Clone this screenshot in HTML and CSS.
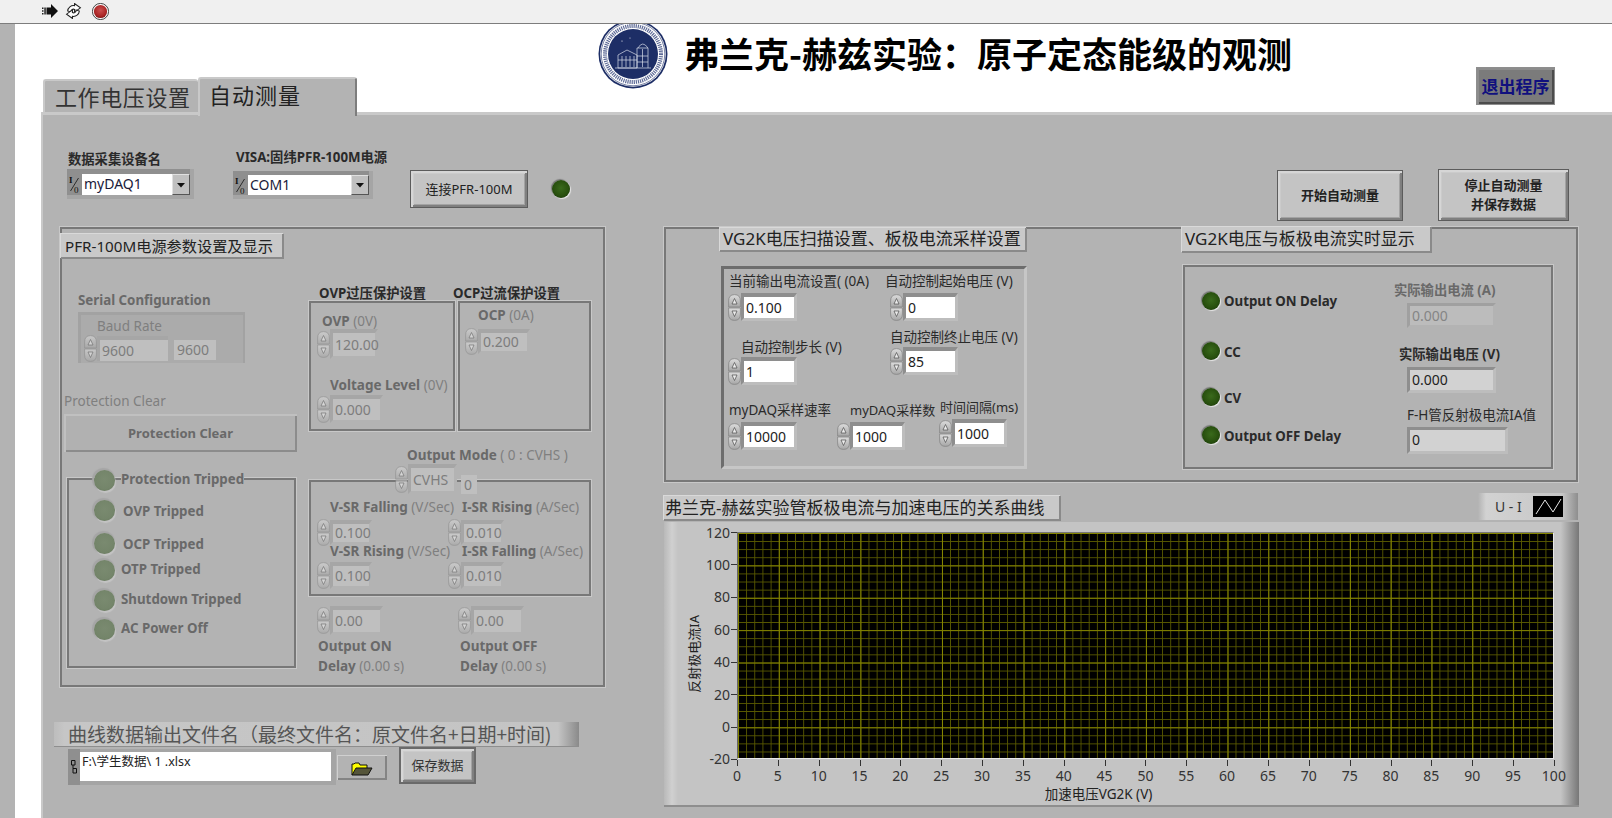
FILE: index.html
```html
<!DOCTYPE html>
<html lang="zh">
<head>
<meta charset="utf-8">
<title>弗兰克-赫兹实验</title>
<link rel="stylesheet" href="styles.css">
</head>
<body>
<svg class="defs" width="0" height="0" aria-hidden="true">
  <defs>
    <linearGradient id="lobe" x1="0" x2="0" y1="0" y2="1"><stop offset="0" stop-color="#dcdcdc"/><stop offset="1" stop-color="#a6a6a6"/></linearGradient>
    <radialGradient id="redball" cx=".5" cy=".4" r=".65"><stop offset="0" stop-color="#cc4f4f"/><stop offset=".7" stop-color="#aa2626"/><stop offset="1" stop-color="#701212"/></radialGradient>
    <symbol id="spin" viewBox="0 0 13 27">
      <path d="M.6 7Q.6 .6 6.500 .6Q12.400 .6 12.400 7V13H.6Z" fill="url(#lobe)" stroke="#858585" stroke-width=".8"/>
      <path d="M.6 14H12.400V20Q12.400 26.400 6.500 26.400Q.6 26.400 .6 20Z" fill="url(#lobe)" stroke="#858585" stroke-width=".8"/>
      <path d="M6.500 4.500L4 10H9Z" fill="#ececec" stroke="#4a4a4a" stroke-width=".7"/>
      <path d="M6.500 22.500L4 17H9Z" fill="#ececec" stroke="#4a4a4a" stroke-width=".7"/>
    </symbol>
    <symbol id="io" viewBox="0 0 13 20">
      <text x="1" y="9" font-size="9" font-family="Liberation Serif, serif" font-weight="700" fill="#111">I</text>
      <text x="6" y="19" font-size="9" font-family="Liberation Serif, serif" fill="#111">0</text>
      <path d="M10.500 4L2.500 17" stroke="#111" stroke-width=".8"/>
    </symbol>
    <symbol id="arrowdown" viewBox="0 0 10 10"><path d="M1 3H9L5 7.500Z" fill="#111"/></symbol>
  </defs>
</svg>

<main class="canvas">
  <header class="toolbar">
    <svg class="tool tool-run" viewBox="0 0 16 14"><path d="M0 3.500H1.500V5H0ZM0 6.200H1.500V7.800H0ZM0 9H1.500V10.500H0ZM2.300 3.500H3.800V10.500H2.300Z" fill="#222"/><path d="M4.500 3.500H9V0L16 7L9 14V10.500H4.500Z" fill="#111"/></svg>
    <svg class="tool tool-cont" viewBox="0 0 16 15"><path d="M2.500 7.500A5.500 5.500 0 0 1 9 2.500V.5L14.500 4.500L9 8.500V6A2.500 2.500 0 0 0 5.500 8.500Z" fill="#fff" stroke="#222" stroke-width="1"/><path d="M13.500 7.500A5.500 5.500 0 0 1 7 12.500V14.500L1.500 10.500L7 6.500V9A2.500 2.500 0 0 0 10.500 6.500Z" fill="#fff" stroke="#222" stroke-width="1"/></svg>
    <svg class="tool tool-stop" viewBox="0 0 16 16"><circle cx="8" cy="8" r="7.600" fill="#fff" stroke="#222" stroke-width=".8"/><circle cx="8" cy="8" r="6.200" fill="url(#redball)"/></svg>
  </header>

  <div class="strip"></div>

  <svg class="logo" viewBox="0 0 70 70">
    <circle cx="35" cy="35" r="34.500" fill="#1d2e66"/>
    <circle cx="35" cy="35" r="32.800" fill="#fff"/>
    <circle cx="35" cy="35" r="31.800" fill="none" stroke="#1d2e66" stroke-width=".6"/>
    <circle cx="35" cy="35" r="28" fill="none" stroke="#5d6a96" stroke-width="4" stroke-dasharray="1.200 .9"/>
    <circle cx="35" cy="35" r="25" fill="#1d2e66"/>
    <g fill="none" stroke="#d8dcea" stroke-width=".7">
      <path d="M20 49V36L29 31L39 36V49ZM17 49H53"/>
      <path d="M20 41H39M24 37V48M28 37V48M32 37V48M36 37V48"/>
      <path d="M39 49V29H50V49M40 29Q44.500 21 50 29M44.500 30V48M39 37H50M39 43H50"/>
    </g>
    <circle cx="24" cy="22" r=".6" fill="#fff"/><circle cx="32" cy="19" r=".5" fill="#fff"/>
  </svg>
  <h1 class="title">弗兰克-赫兹实验&#xFF1A;原子定态能级的观测</h1>
  <button class="btn btn-exit">退出程序</button>

  <div class="panel"></div>
  <div class="tab tab-one">工作电压设置</div>
  <div class="tab tab-two">自动测量</div>

  <section class="sec-top">
    <span class="lbl bold l-daq">数据采集设备名</span>
    <span class="lbl bold l-visa">VISA:固纬PFR-100M电源</span>
    <div class="ring ring-daq"><svg class="io"><use href="#io"/></svg><span class="ring-val">myDAQ1</span><span class="ring-btn"><svg class="ring-arrow"><use href="#arrowdown"/></svg></span></div>
    <div class="ring ring-com"><svg class="io"><use href="#io"/></svg><span class="ring-val">COM1</span><span class="ring-btn"><svg class="ring-arrow"><use href="#arrowdown"/></svg></span></div>
    <button class="btn btn-conn">连接PFR-100M</button>
    <span class="led led-conn"></span>
    <button class="btn btn-start">开始自动测量</button>
    <button class="btn btn-stop">停止自动测量<br>并保存数据</button>
  </section>

  <section class="sec-power">
    <div class="grp grp-power"></div>
    <div class="cap cap-power">PFR-100M电源参数设置及显示</div>

    <span class="lbl dis bold l-serial">Serial Configuration</span>
    <div class="baud"></div>
    <span class="lbl dis l-baud">Baud Rate</span>
    <div class="num d-baud dim"><svg class="spin"><use href="#spin"/></svg><span class="val flat">9600</span></div>
    <span class="flatbox d-baud2">9600</span>

    <span class="lbl dis l-pc">Protection Clear</span>
    <button class="btn btn-pc">Protection Clear</button>

    <span class="lbl bold l-ovph">OVP过压保护设置</span>
    <span class="lbl bold l-ocph">OCP过流保护设置</span>
    <div class="grp grp-ovp"></div>
    <div class="grp grp-ocp"></div>
    <span class="lbl dis l-ovp"><b>OVP</b> (0V)</span>
    <div class="num d-ovp dim"><svg class="spin"><use href="#spin"/></svg><span class="val">120.00</span></div>
    <span class="lbl dis l-volt"><b>Voltage Level</b> (0V)</span>
    <div class="num d-volt dim"><svg class="spin"><use href="#spin"/></svg><span class="val">0.000</span></div>
    <span class="lbl dis l-ocp"><b>OCP</b> (0A)</span>
    <div class="num d-ocp dim"><svg class="spin"><use href="#spin"/></svg><span class="val">0.200</span></div>

    <div class="grp grp-trip"></div>
    <span class="lbl dis bold masked l-t1">Protection Tripped</span>
    <span class="lbl dis bold l-t2">OVP Tripped</span>
    <span class="lbl dis bold l-t3">OCP Tripped</span>
    <span class="lbl dis bold l-t4">OTP Tripped</span>
    <span class="lbl dis bold l-t5">Shutdown Tripped</span>
    <span class="lbl dis bold l-t6">AC Power Off</span>
    <span class="led big t1"></span><span class="led big t2"></span><span class="led big t3"></span>
    <span class="led big t4"></span><span class="led big t5"></span><span class="led big t6"></span>

    <span class="lbl dis l-mode"><b>Output Mode</b> ( 0 : CVHS )</span>
    <div class="grp grp-mode"></div>
    <div class="num d-mode dim"><svg class="spin"><use href="#spin"/></svg><span class="val">CVHS</span></div>
    <span class="flatbox d-zero">0</span>
    <span class="lbl dis l-vf"><b>V-SR Falling</b> (V/Sec)</span>
    <span class="lbl dis l-ir"><b>I-SR Rising</b> (A/Sec)</span>
    <div class="num d-vf dim"><svg class="spin"><use href="#spin"/></svg><span class="val">0.100</span></div>
    <div class="num d-ir dim"><svg class="spin"><use href="#spin"/></svg><span class="val">0.010</span></div>
    <span class="lbl dis l-vr"><b>V-SR Rising</b> (V/Sec)</span>
    <span class="lbl dis l-if"><b>I-SR Falling</b> (A/Sec)</span>
    <div class="num d-vr dim"><svg class="spin"><use href="#spin"/></svg><span class="val">0.100</span></div>
    <div class="num d-if dim"><svg class="spin"><use href="#spin"/></svg><span class="val">0.010</span></div>
    <div class="num d-on dim"><svg class="spin"><use href="#spin"/></svg><span class="val">0.00</span></div>
    <div class="num d-off dim"><svg class="spin"><use href="#spin"/></svg><span class="val">0.00</span></div>
    <span class="lbl dis two l-on"><b>Output ON</b><br><b>Delay</b> (0.00 s)</span>
    <span class="lbl dis two l-off"><b>Output OFF</b><br><b>Delay</b> (0.00 s)</span>
  </section>

  <section class="sec-file">
    <div class="filecap">曲线数据输出文件名&#xFF08;最终文件名&#xFF1A;原文件名+日期+时间)</div>
    <div class="path">
      <svg class="path-ico" viewBox="0 0 6 14"><path d="M.5 .5H4V5H.5ZM2 5V8.500M2 8.500H5.500V13H2Z" fill="none" stroke="#111"/></svg>
      <span class="path-val">F:\学生数据\ 1 .xlsx</span>
    </div>
    <button class="browse">
      <svg class="folder" viewBox="0 0 22 14"><path d="M1 13V2H3L4 1H8L9 3H16V6" fill="#ffff00" stroke="#111"/><path d="M1 13L5 6H21L17 13Z" fill="#55553a" stroke="#111"/></svg>
    </button>
    <button class="btn btn-save">保存数据</button>
  </section>

  <section class="sec-vg">
    <div class="grp grp-vg"></div>
    <div class="cap cap-scan">VG2K电压扫描设置、板极电流采样设置</div>
    <div class="cap cap-real">VG2K电压与板极电流实时显示</div>
    <div class="inner inner-scan"></div>
    <div class="inner inner-real"></div>

    <span class="lbl l-cur">当前输出电流设置( (0A)</span>
    <div class="num n-cur"><svg class="spin"><use href="#spin"/></svg><span class="val">0.100</span></div>
    <span class="lbl l-start">自动控制起始电压 (V)</span>
    <div class="num n-start"><svg class="spin"><use href="#spin"/></svg><span class="val">0</span></div>
    <span class="lbl l-step">自动控制步长 (V)</span>
    <div class="num n-step"><svg class="spin"><use href="#spin"/></svg><span class="val">1</span></div>
    <span class="lbl l-stop">自动控制终止电压 (V)</span>
    <div class="num n-stop"><svg class="spin"><use href="#spin"/></svg><span class="val">85</span></div>
    <span class="lbl l-rate">myDAQ采样速率</span>
    <div class="num n-rate"><svg class="spin"><use href="#spin"/></svg><span class="val">10000</span></div>
    <span class="lbl l-cnt">myDAQ采样数</span>
    <div class="num n-cnt"><svg class="spin"><use href="#spin"/></svg><span class="val">1000</span></div>
    <span class="lbl l-itv">时间间隔(ms)</span>
    <div class="num n-itv"><svg class="spin"><use href="#spin"/></svg><span class="val">1000</span></div>

    <span class="led s1"></span><span class="lbl bold l-s1">Output ON Delay</span>
    <span class="led s2"></span><span class="lbl bold l-s2">CC</span>
    <span class="led s3"></span><span class="lbl bold l-s3">CV</span>
    <span class="led s4"></span><span class="lbl bold l-s4">Output OFF Delay</span>

    <span class="lbl dis bold l-rcur">实际输出电流 (A)</span>
    <span class="ind ind-dis r-cur">0.000</span>
    <span class="lbl bold l-rvolt">实际输出电压 (V)</span>
    <span class="ind r-volt">0.000</span>
    <span class="lbl l-ria">F-H管反射极电流IA值</span>
    <span class="ind r-ia">0</span>
  </section>

  <section class="sec-graph">
    <div class="cap cap-graph">弗兰克-赫兹实验管板极电流与加速电压的关系曲线</div>
    <div class="legend"><span class="legend-name">U - I</span>
      <svg class="legend-ico" viewBox="0 0 30 21"><path d="M3 18L12 4L20 16L28 3" fill="none" stroke="#e8e8e8"/></svg>
    </div>
    <div class="graph">
      <div class="ytitle">反射极电流IA</div>
      <div class="yaxis">
        <span>120</span><span>100</span><span>80</span><span>60</span><span>40</span><span>20</span><span>0</span><span>-20</span>
      </div>
      <div class="plot"></div>
      <div class="xaxis">
        <span>0</span><span>5</span><span>10</span><span>15</span><span>20</span><span>25</span><span>30</span><span>35</span><span>40</span><span>45</span><span>50</span><span>55</span><span>60</span><span>65</span><span>70</span><span>75</span><span>80</span><span>85</span><span>90</span><span>95</span><span>100</span>
      </div>
      <div class="xtitle">加速电压VG2K (V)</div>
    </div>
  </section>
</main>
</body>
</html>
```

FILE: styles.css
```css
* { box-sizing: border-box; }
html, body { margin: 0; padding: 0; background: #fff; overflow: hidden; }
body { font-family: "Noto Sans", "Noto Sans CJK SC", sans-serif; font-size: 13px; color: #222; }
.defs { position: absolute; }
.canvas { position: relative; width: 1612px; height: 818px; overflow: hidden; background: #fff; }

/* toolbar */
.toolbar { position: relative; z-index: 5; height: 24px; background: #f0f0f0; border-bottom: 1px solid #7d7d7d; display: flex; align-items: center; padding: 0 0 1px 42px; }
.tool { display: block; flex: none; }
.tool-run { width: 16px; height: 14px; margin-right: 7px; }
.tool-cont { width: 17px; height: 16px; margin-right: 10px; }
.tool-stop { width: 17px; height: 17px; }
.strip { position: absolute; left: 0; top: 24px; width: 15px; bottom: 0; background: #b3b3b3; }

/* header */
.logo { position: absolute; left: 598px; top: 19px; width: 70px; height: 70px; }
.title { position: absolute; left: 684px; top: 28px; margin: 0; font: 700 35px/50px "Noto Sans CJK SC", sans-serif; color: #000; white-space: nowrap; }

/* panel and tabs */
.panel { position: absolute; left: 41px; top: 112px; right: 0; bottom: 0; background: #b3b3b3; border-top: 3px solid #c9c9c9; border-left: 2px solid #c9c9c9; }
.tab { position: absolute; background: #b3b3b3; border-top: 2px solid #c9c9c9; border-left: 2px solid #c9c9c9; font: 400 22px/30px "Noto Sans CJK SC", sans-serif; color: #333; white-space: nowrap; border-radius: 3px 3px 0 0; }
.tab-one { left: 43px; top: 79px; width: 155px; height: 33px; padding: 0 0 0 10px; letter-spacing: .6px; }
.tab-two { left: 198px; top: 77px; width: 159px; height: 39px; padding: 0 0 0 9px; letter-spacing: 1px; border-right: 2px solid #7d7d7d; color: #222; }

/* generic labels */
.lbl { position: absolute; white-space: nowrap; line-height: 16px; font-size: 13.500px; color: #2a2a2a; }
.lbl b { font-weight: 700; }
.bold { font-weight: 700; font-size: 13.300px; }
.dis { color: #7f7f7f; }
.dis b, .dis.bold { color: #696969; }
.two { line-height: 20px; }
.masked { background: #b3b3b3; }

/* buttons */
.btn { position: absolute; margin: 0; padding: 0; display: block; font-family: inherit; font-size: 13px; line-height: 19px; color: #222; background: #c4c4c4; border: 1px solid #5c5c5c; box-shadow: inset 2px 2px 0 #d6d6d6, inset -2px -2px 0 #7f7f7f, inset 3px 3px 0 #cbcbcb, inset -3px -3px 0 #a3a3a3; }
.btn-exit { left: 1476px; top: 67px; width: 79px; height: 38px; font-size: 17px; font-weight: 700; color: #10107e; background: #7b7b7b; border-color: #8e8e8e; box-shadow: inset 2px 2px 0 #8c8c8c, inset -2px -2px 0 #4c4c4c; }
.btn-conn { left: 410px; top: 170px; width: 118px; height: 38px; }
.btn-start { left: 1277px; top: 170px; width: 126px; height: 51px; font-weight: 700; }
.btn-stop { left: 1438px; top: 169px; width: 131px; height: 52px; font-weight: 700; }
.btn-pc { left: 64px; top: 414px; width: 233px; height: 38px; font-weight: 700; color: #696969; background: #b1b1b1; border: 0; box-shadow: inset 2px 2px 0 #c0c0c0, inset -2px -2px 0 #8c8c8c; }
.btn-save { left: 399px; top: 747px; width: 77px; height: 37px; color: #333; border: 2px solid #6a6a6a; }

/* top controls */
.l-daq { left: 68px; top: 151px; }
.l-visa { left: 236px; top: 149px; }
.ring { position: absolute; display: flex; background: #8f8f8f; border: solid #a5a5a5; border-width: 0 4px 4px 0; padding-top: 5px; }
.ring-daq { left: 67px; top: 169px; width: 127px; height: 30px; }
.ring-com { left: 233px; top: 171px; width: 140px; height: 28px; padding-top: 4px; }
.io { width: 15px; height: 20px; flex: none; }
.ring-val { flex: 1; background: #fff; font-size: 14px; line-height: 20px; color: #1a1a3a; padding-left: 2px; }
.ring-btn { width: 18px; background: #c0c0c0; border: 1px solid; border-color: #e0e0e0 #555 #555 #e0e0e0; display: flex; align-items: center; justify-content: center; }
.ring-arrow { width: 10px; height: 10px; }

/* LEDs */
.led { position: absolute; width: 18px; height: 18px; border-radius: 50%; background: radial-gradient(circle at 50% 45%, #3a6a1c 0, #29510f 55%, #173409 100%); box-shadow: 1px 1px 1px 0 #e9e9e9, -1px -1px 1px 0 #777; }
.led-conn { left: 552px; top: 180px; }
.s1 { left: 1202px; top: 292px; }
.s2 { left: 1202px; top: 342px; }
.s3 { left: 1202px; top: 388px; }
.s4 { left: 1202px; top: 426px; }
.big { width: 21px; height: 21px; background: radial-gradient(circle at 50% 45%, #7a8a70 0, #74856a 60%, #66775c 100%); box-shadow: 1px 2px 1px 0 #c4c4c4, -1px -1px 1px 1px #a5a5a5; }
.t1 { left: 94px; top: 470px; }
.t2 { left: 94px; top: 500px; }
.t3 { left: 94px; top: 533px; }
.t4 { left: 94px; top: 560px; }
.t5 { left: 94px; top: 590px; }
.t6 { left: 94px; top: 619px; }

/* group frames */
.grp { position: absolute; border: 2px solid #787878; box-shadow: 0 0 0 1px #c8c8c8; }
.grp-power { left: 60px; top: 227px; width: 545px; height: 460px; }
.grp-ovp { left: 309px; top: 301px; width: 146px; height: 130px; }
.grp-ocp { left: 458px; top: 301px; width: 133px; height: 130px; }
.grp-trip { left: 67px; top: 478px; width: 229px; height: 190px; }
.grp-mode { left: 309px; top: 480px; width: 282px; height: 116px; }
.grp-vg { left: 664px; top: 227px; width: 914px; height: 255px; }
.baud { position: absolute; left: 78px; top: 312px; width: 167px; height: 51px; background: #ababab; border: 3px solid #a2a2a2; border-bottom: 0; border-right-width: 2px; }

/* captions */
.cap { position: absolute; background: #c9c9c9; color: #222; white-space: nowrap; border: solid #8a8a8a; border-width: 0 2px 2px 0; box-shadow: -1px -1px 0 #d9d9d9; font-size: 17px; line-height: 24px; }
.cap-power { left: 61px; top: 234px; width: 223px; height: 25px; font-size: 15.200px; line-height: 24px; padding-left: 4px; }
.cap-scan { left: 720px; top: 228px; width: 307px; height: 24px; line-height: 22px; padding-left: 3px; }
.cap-real { left: 1182px; top: 227px; width: 250px; height: 26px; line-height: 24px; padding-left: 3px; }
.cap-graph { left: 664px; top: 496px; width: 397px; height: 25px; padding-left: 1px; }

/* numeric controls */
.num { position: absolute; display: flex; align-items: center; }
.spin { width: 13px; height: 27px; flex: none; display: block; }
.val { display: flex; align-items: center; height: 28px; border: solid; border-width: 4px 3px 3px 3px; border-color: #8e8e8e #bdbdbd #bdbdbd #8e8e8e; background: #fff; background-clip: padding-box; font-size: 14px; line-height: 20px; padding-left: 2px; color: #1c1c1c; }
.dim .spin { opacity: .6; }
.dim .val { height: 27px; background: #bfbfbf; background-clip: padding-box; border-color: #a6a6a6 #b3b3b3 #b3b3b3 #a6a6a6; color: #7d7d7d; }
.flat { border-color: #a6a6a6 !important; border-width: 4px 0 0 3px; }
.flatbox { position: absolute; background: #bfbfbf; color: #7d7d7d; font-size: 14px; line-height: 20px; padding-left: 3px; }

.n-cur { left: 728px; top: 293px; } .n-cur .val { width: 56px; }
.n-start { left: 890px; top: 293px; } .n-start .val { width: 55px; }
.n-step { left: 728px; top: 357px; } .n-step .val { width: 56px; }
.n-stop { left: 890px; top: 347px; } .n-stop .val { width: 55px; }
.n-rate { left: 728px; top: 422px; } .n-rate .val { width: 56px; }
.n-cnt { left: 837px; top: 422px; } .n-cnt .val { width: 55px; }
.n-itv { left: 939px; top: 419px; } .n-itv .val { width: 55px; }

.l-cur { left: 729px; top: 273px; }
.l-start { left: 885px; top: 273px; }
.l-step { left: 741px; top: 339px; }
.l-stop { left: 890px; top: 329px; }
.l-rate { left: 729px; top: 402px; }
.l-cnt { left: 850px; top: 402px; font-size: 13px; }
.l-itv { left: 940px; top: 399px; font-size: 13px; }

.d-baud { left: 84px; top: 335px; } .d-baud .val { width: 71px; height: 25px; }
.d-baud2 { left: 174px; top: 340px; width: 42px; height: 20px; }
.d-ovp { left: 317px; top: 329px; } .d-ovp .val { width: 48px; height: 30px; }
.d-volt { left: 317px; top: 395px; } .d-volt .val { width: 53px; height: 28px; }
.d-ocp { left: 465px; top: 328px; } .d-ocp .val { width: 52px; height: 25px; }
.d-mode { left: 395px; top: 464px; } .d-mode .val { width: 49px; height: 30px; }
.d-zero { left: 461px; top: 475px; width: 16px; height: 19px; }
.d-vf { left: 317px; top: 519px; } .d-vf .val { width: 42px; height: 25px; }
.d-ir { left: 448px; top: 519px; } .d-ir .val { width: 43px; height: 25px; }
.d-vr { left: 317px; top: 562px; } .d-vr .val { width: 42px; height: 27px; }
.d-if { left: 448px; top: 562px; } .d-if .val { width: 43px; height: 27px; }
.d-on { left: 317px; top: 606px; } .d-on .val { width: 53px; height: 29px; }
.d-off { left: 458px; top: 606px; } .d-off .val { width: 53px; height: 29px; }

.l-serial { left: 78px; top: 292px; }
.l-baud { left: 97px; top: 318px; }
.l-pc { left: 64px; top: 393px; }
.l-ovph { left: 319px; top: 285px; }
.l-ocph { left: 453px; top: 285px; }
.l-ovp { left: 322px; top: 313px; }
.l-volt { left: 330px; top: 377px; }
.l-ocp { left: 478px; top: 307px; }
.l-t1 { left: 121px; top: 471px; }
.l-t2 { left: 123px; top: 503px; }
.l-t3 { left: 123px; top: 536px; }
.l-t4 { left: 121px; top: 561px; }
.l-t5 { left: 121px; top: 591px; }
.l-t6 { left: 121px; top: 620px; }
.l-mode { left: 407px; top: 447px; }
.l-vf { left: 330px; top: 499px; }
.l-ir { left: 462px; top: 499px; }
.l-vr { left: 330px; top: 543px; }
.l-if { left: 462px; top: 543px; }
.l-on { left: 318px; top: 636px; }
.l-off { left: 460px; top: 636px; }

/* inner boxes */
.inner { position: absolute; }
.inner-scan { left: 721px; top: 266px; width: 306px; height: 203px; border: solid; border-width: 3px; border-color: #6d6d6d #c6c6c6 #c6c6c6 #6d6d6d; }
.inner-real { left: 1183px; top: 265px; width: 370px; height: 204px; border: 2px solid #787878; box-shadow: 0 0 0 1px #c8c8c8; }

/* right indicators */
.l-s1 { left: 1224px; top: 293px; }
.l-s2 { left: 1224px; top: 344px; }
.l-s3 { left: 1224px; top: 390px; }
.l-s4 { left: 1224px; top: 428px; }
.l-rcur { left: 1394px; top: 282px; }
.l-rvolt { left: 1399px; top: 346px; }
.l-ria { left: 1407px; top: 407px; }
.ind { position: absolute; display: block; background: #d2d2d2; border: 3px solid; border-color: #8e8e8e #bdbdbd #bdbdbd #8e8e8e; font-size: 14px; line-height: 20px; padding-left: 2px; color: #222; }
.ind-dis { background: #bcbcbc; border-color: #a0a0a0 #b3b3b3 #b3b3b3 #a0a0a0; color: #858585; }
.r-cur { left: 1407px; top: 303px; width: 89px; height: 25px; }
.r-volt { left: 1407px; top: 367px; width: 89px; height: 26px; }
.r-ia { left: 1407px; top: 427px; width: 101px; height: 27px; }

/* file row */
.filecap { position: absolute; left: 54px; top: 722px; width: 525px; height: 25px; padding-left: 14px; background: linear-gradient(90deg, #bdbdbd 0, #c6c6c6 2%, #c4c4c4 96%, #8a8a8a 100%); color: #555; font: 400 19px/24px "Noto Sans CJK SC", sans-serif; white-space: nowrap; border-bottom: 1px solid #8e8e8e; }
.path { position: absolute; left: 68px; top: 749px; width: 268px; height: 36px; display: flex; background: #a5a5a5; padding: 3px 5px 4px 0; box-shadow: inset 12px 0 0 #8f8f8f; }
.path-ico { width: 6px; height: 14px; margin: 8px 3px 0 3px; flex: none; }
.path-val { flex: 1; background: #fff; font-size: 12.500px; line-height: 20px; padding-left: 2px; color: #222; }
.browse { position: absolute; left: 337px; top: 755px; width: 50px; height: 25px; margin: 0; padding: 0; display: flex; align-items: center; justify-content: center; background: #b3b3b3; border: 0; box-shadow: inset 1px 1px 0 #d0d0d0, inset -2px -2px 0 #848484; }
.folder { width: 22px; height: 14px; margin-top: 2px; }

/* graph */
.legend { position: absolute; left: 1478px; top: 493px; width: 100px; height: 27px; display: flex; align-items: center; background: linear-gradient(90deg, #b3b3b3 0, #d2d2d2 8%, #c7c7c7 84%, #8e8e8e 100%); }
.legend-name { font-size: 14px; margin-left: 17px; width: 38px; color: #333; }
.legend-ico { width: 30px; height: 21px; background: #000; }
.graph { position: absolute; left: 664px; top: 522px; width: 915px; height: 285px; display: grid; grid-template-columns: 58px 15px 817px 25px; grid-template-rows: 10px 227px 34px 14px; background: linear-gradient(90deg, #b9b9b9 0, #d0d0d0 8px, #c4c4c4 14px, #c4c4c4 98%, #777 100%); border-bottom: 2px solid #8e8e8e; }
.ytitle { grid-column: 1; grid-row: 2; align-self: center; justify-self: center; writing-mode: vertical-rl; text-orientation: sideways; transform: rotate(180deg); font-size: 13px; color: #222; white-space: nowrap; margin-top: 16px; }
.yaxis { grid-column: 2; grid-row: 2; display: flex; flex-direction: column; justify-content: space-between; align-items: flex-end; }
.yaxis span { height: 0; display: flex; align-items: center; padding-right: 7px; position: relative; font-size: 14px; color: #333; white-space: nowrap; }
.yaxis span::after { content: ""; position: absolute; right: 0; top: 0; width: 6px; height: 1px; background: #333; }
.plot { grid-column: 3; grid-row: 2; border-left: 1px solid #666; border-top: 1px solid #777; border-bottom: 1px solid #e8e8e8; border-right: 1px solid #e8e8e8;
  background:
    linear-gradient(to right, #858500 1px, transparent 1px) 0 0 / 40.8px 100%,
    linear-gradient(to bottom, #858500 1px, transparent 1px) 0 0 / 100% 32.4px,
    linear-gradient(to right, #585800 1px, transparent 1px) 0 0 / 8.16px 100%,
    linear-gradient(to bottom, #585800 1px, transparent 1px) 0 0 / 100% 8.1px,
    #000;
}
.xaxis { grid-column: 3; grid-row: 3; display: flex; justify-content: space-between; }
.xaxis span { width: 0; display: flex; justify-content: center; position: relative; padding-top: 7px; font-size: 14px; line-height: 20px; color: #333; white-space: nowrap; }
.xaxis span::before { content: ""; position: absolute; left: 0; top: 1px; width: 1px; height: 6px; background: #333; }
.xtitle { grid-column: 3; grid-row: 4; justify-self: center; font-size: 13.500px; line-height: 14px; color: #222; white-space: nowrap; margin-right: 94px; margin-top: -6px; }
```
